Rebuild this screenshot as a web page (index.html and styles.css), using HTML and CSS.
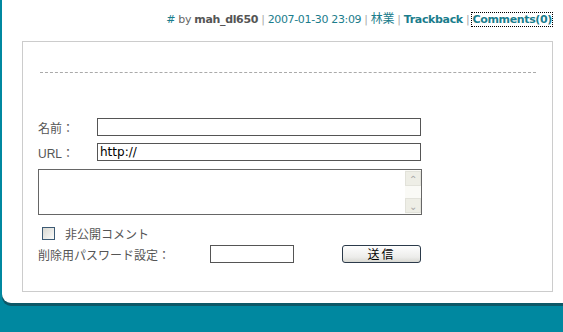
FILE: index.html
```html
<!DOCTYPE html>
<html>
<head lang="ja">
    <meta charset="UTF-8">
    <title>comment</title>
    <link rel="stylesheet" href="styles.css">
</head>
<body>
<div class="panel">
    <div class="meta">
        <a class="teal" href="#">#</a> by <b class="author">mah_dl650</b>
        <span class="sep">|</span> <span class="teal">2007-01-30 23:09</span>
        <span class="sep">|</span> <a class="teal cat" href="#">林業</a>
        <span class="sep">|</span> <a class="teal bold" href="#">Trackback</a>
        <span class="sep">|</span> <a class="teal bold focus" href="#">Comments(0)</a>
    </div>
    <div class="box">
        <div class="dash"></div>
        <form class="form">
            <div class="row">
                <label class="lbl">名前：</label>
                <input class="txt" type="text"/>
            </div>
            <div class="row row2">
                <label class="lbl">URL：</label>
                <input class="txt url" type="text" value="http://"/>
            </div>
            <div class="area">
                <textarea></textarea>
                <div class="bar">
                    <span class="btn-arr">&#8963;</span>
                    <span class="btn-arr down">&#8964;</span>
                </div>
            </div>
            <div class="check">
                <span class="box13"></span><label>非公開コメント</label>
            </div>
            <div class="row pw">
                <label class="lbl wide">削除用パスワード設定：</label>
                <input class="txt small" type="password"/>
                <button class="send" type="button">送信</button>
            </div>
        </form>
    </div>
</div>
</body>
</html>
```

FILE: styles.css
```css
*{
    margin:0;
    padding:0;
    box-sizing:border-box;
}
body{
    background:#0088a0;
    font-family:"Liberation Sans", "Noto Sans CJK JP", sans-serif;
    font-size:12px;
    color:#555;
    height:332px;
    overflow:hidden;
}
.panel{
    background:#fff;
    margin-left:2px;
    height:303px;
    border-bottom-left-radius:9px;
    box-shadow:0 3px 0 #0d5867;
    padding-top:11px;
}
.meta{
    text-align:right;
    padding-right:11px;
    height:16px;
    font-family:"DejaVu Sans", "Noto Sans CJK JP", sans-serif;
    font-size:11px;
    line-height:16px;
    color:#666;
    letter-spacing:-0.35px;
}
.meta a{
    text-decoration:none;
}
.teal{
    color:#1b7d8c;
}
.author{
    color:#555;
}
.bold{
    font-weight:bold;
}
.cat{
    font-size:12px;
}
.sep{
    color:#aaa;
}
.focus{
    outline:1px dotted #000;
}
.box{
    margin:14px 10px 0 20px;
    height:251px;
    border:1px solid #ccc;
    padding:30px 16px 0 17px;
}
.dash{
    border-top:1px dashed #aaa;
}
.form{
    padding-top:45px;
    margin-left:-2px;
}
.row{
    display:flex;
    align-items:center;
    height:18px;
}
.row2{
    margin-top:7px;
}
.lbl{
    width:59px;
    font-size:12px;
}
.txt{
    width:324px;
    height:18px;
    border:1px solid #555;
    font-family:"DejaVu Sans", sans-serif;
    font-size:12px;
    padding:0 2px;
    color:#000;
    outline:none;
}
.area{
    display:flex;
    width:384px;
    height:46px;
    margin-top:8px;
    border:1px solid #666;
}
.area textarea{
    flex:1;
    border:none;
    resize:none;
    outline:none;
}
.bar{
    width:16px;
    display:flex;
    flex-direction:column;
    justify-content:space-between;
    background:#fafaf6;
    padding:1px 0;
}
.btn-arr{
    height:15px;
    background:#eeeee6;
    border:1px solid #e2e2da;
    color:#a8a8a8;
    font-size:10px;
    line-height:15px;
    text-align:center;
}
.check{
    display:flex;
    align-items:center;
    margin-top:12px;
    margin-left:4px;
    height:13px;
}
.box13{
    width:13px;
    height:13px;
    border:1px solid #3c5a74;
    background:linear-gradient(135deg,#d8d8d2,#fafaf8);
    margin-right:10px;
}
.pw{
    margin-top:5px;
}
.wide{
    width:172px;
}
.small{
    width:84px;
}
.send{
    margin-left:48px;
    width:79px;
    height:18px;
    border:1px solid #2b3a4a;
    border-radius:3px;
    background:linear-gradient(#fefefe,#ececea 70%,#d8d8d2);
    font-family:"Noto Sans CJK JP", sans-serif;
    font-size:12px;
    letter-spacing:2px;
    color:#000;
    line-height:14px;
}
```
